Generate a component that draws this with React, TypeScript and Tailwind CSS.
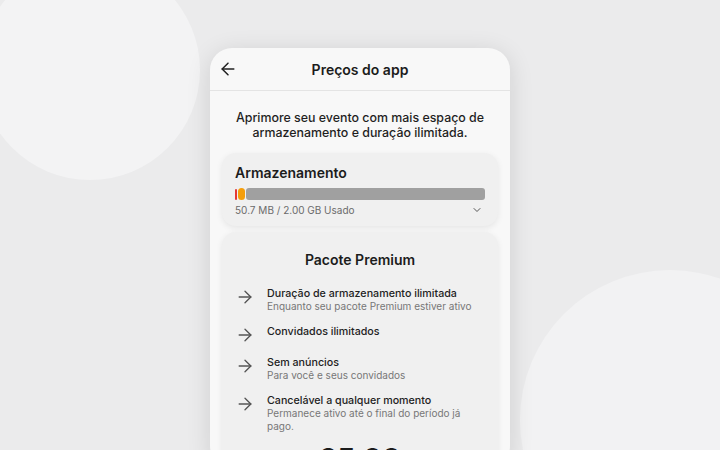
import { ArrowLeft, ArrowRight, ChevronDown } from "lucide-react";

const FEATURES = [
  { title: "Duração de armazenamento ilimitada", sub: "Enquanto seu pacote Premium estiver ativo" },
  { title: "Convidados ilimitados", sub: "" },
  { title: "Sem anúncios", sub: "Para você e seus convidados" },
  { title: "Cancelável a qualquer momento", sub: "Permanece ativo até o final do período já pago." },
];

export default function App() {
  return (
    <div
      className="relative h-[450px] w-[720px] overflow-hidden bg-[#ebebec]"
      style={{ fontFamily: "Inter, 'Noto Sans', sans-serif" }}
    >
      {/* background blobs */}
      <div className="absolute left-[-20px] top-[-40px] h-[220px] w-[220px] rounded-full bg-[#f3f3f4]" />
      <div className="absolute left-[520px] top-[270px] h-[300px] w-[300px] rounded-full bg-[#f2f2f3]" />

      <div className="relative mx-auto mt-[48px] h-[420px] w-[300px] overflow-hidden rounded-[22px] bg-[#f8f8f8] shadow-[0_4px_24px_rgba(0,0,0,0.12)]">
        {/* Header */}
        <div className="relative flex h-[43px] items-center justify-center border-b border-[#e4e4e4]">
          <ArrowLeft size={20} strokeWidth={1.8} className="absolute left-[8px] text-[#222]" />
          <span className="text-[14px] font-semibold text-[#1c1c1c]">Preços do app</span>
        </div>

        <p className="px-4 pt-[19px] text-center text-[12.4px] font-medium leading-[15px] text-[#1f1f1f]">
          Aprimore seu evento com mais espaço de
          <br />
          armazenamento e duração ilimitada.
        </p>

        {/* Storage */}
        <div className="mx-3 mt-[13px] rounded-[14px] bg-[#f0f0f0] px-[13px] pb-[9px] pt-[10px] shadow-[0_2px_6px_rgba(0,0,0,0.08)]">
          <div className="text-[14px] font-semibold leading-[20px] text-[#1c1c1c]">Armazenamento</div>
          <div className="mt-[5px] flex h-[12px] items-center gap-[1px]">
            <div className="h-[11px] w-[2px] rounded-[1px] bg-[#e53935]" />
            <div className="h-[12px] w-[7px] rounded-full bg-[#f59e0b]" />
            <div className="h-[12px] flex-1 rounded-[3px] bg-[#a0a0a0]" />
          </div>
          <div className="mt-[3px] flex items-center justify-between">
            <span className="text-[10px] leading-[14px] text-[#6b6b6b]">50.7 MB / 2.00 GB Usado</span>
            <ChevronDown size={12} strokeWidth={2} className="mr-[2px] text-[#555]" />
          </div>
        </div>

        {/* Premium */}
        <div className="mx-3 mt-[6px] rounded-[14px] bg-[#f0f0f0] px-[13px] pb-6 pt-[18px] shadow-[0_2px_6px_rgba(0,0,0,0.08)]">
          <div className="text-center text-[14px] font-semibold leading-[20px] text-[#1c1c1c]">Pacote Premium</div>
          <div className="mt-[17px] flex flex-col gap-[11.5px]">
            {FEATURES.map((f) => (
              <div key={f.title} className="flex items-start gap-[12px]">
                <ArrowRight size={20} strokeWidth={1.6} className="shrink-0 text-[#555]" />
                <div className="pr-3">
                  <div className="text-[10.7px] font-medium leading-[13px] text-[#222]">{f.title}</div>
                  {f.sub && <div className="text-[10px] leading-[13px] text-[#777]">{f.sub}</div>}
                </div>
              </div>
            ))}
          </div>
          <div className="mt-[9px] text-center text-[28px] font-bold leading-[34px] text-[#1c1c1c]">35,00</div>
        </div>
      </div>
    </div>
  );
}
